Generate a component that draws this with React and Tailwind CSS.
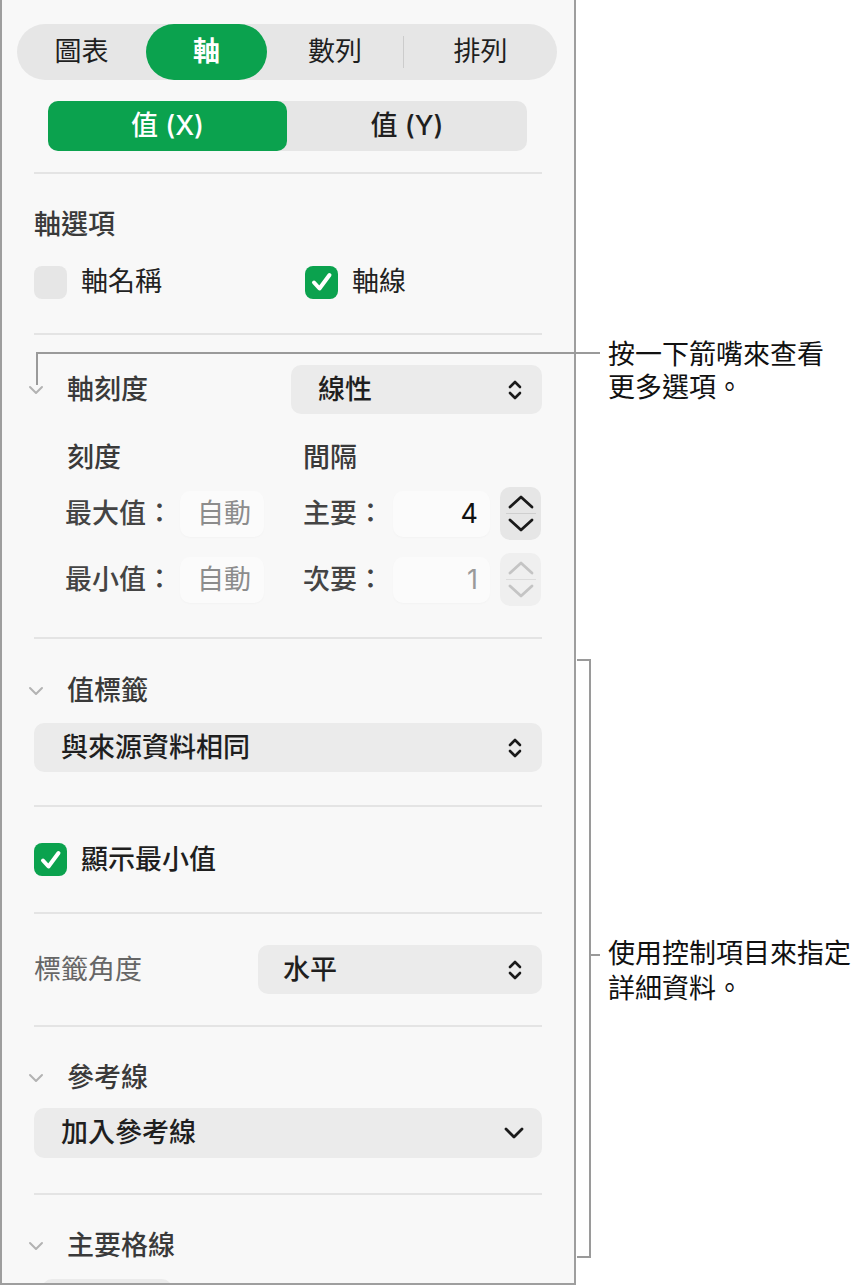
import React from "react";

const FONT = { fontFamily: '"Inter", "Noto Sans CJK TC", sans-serif' };

function Disclosure() {
  return (
    <svg width="16" height="10" viewBox="0 0 16 10" className="shrink-0 -ml-[6px]">
      <path d="M2 2 L8 8 L14 2" fill="none" stroke="#b3b3b3" strokeWidth="2" strokeLinecap="round" strokeLinejoin="round" />
    </svg>
  );
}

function UpDown() {
  return (
    <svg width="16" height="24" viewBox="0 0 16 24" className="shrink-0">
      <path d="M3 9 L8 4 L13 9" fill="none" stroke="#1a1a1a" strokeWidth="2.6" strokeLinecap="round" strokeLinejoin="round" />
      <path d="M3 15 L8 20 L13 15" fill="none" stroke="#1a1a1a" strokeWidth="2.6" strokeLinecap="round" strokeLinejoin="round" />
    </svg>
  );
}

function ChevronDown() {
  return (
    <svg width="20" height="12" viewBox="0 0 20 12" className="shrink-0">
      <path d="M2 2 L10 10 L18 2" fill="none" stroke="#1a1a1a" strokeWidth="2.8" strokeLinecap="round" strokeLinejoin="round" />
    </svg>
  );
}

function Check({ on }) {
  if (!on) return <div className="w-[33px] h-[33px] rounded-[8px] bg-[#e6e6e6] shrink-0" />;
  return (
    <div className="w-[33px] h-[33px] rounded-[8px] bg-[#0ba24e] shrink-0 flex items-center justify-center">
      <svg width="26" height="26" viewBox="0 0 26 26">
        <path d="M5 13.5 L10.5 19.5 L20.5 6" fill="none" stroke="#fff" strokeWidth="4" strokeLinecap="round" strokeLinejoin="round" />
      </svg>
    </div>
  );
}

function Stepper({ faded }) {
  const c = faded ? "#c4c4c4" : "#1a1a1a";
  return (
    <div className={`w-[41px] h-[53px] rounded-[10px] flex flex-col items-center justify-center ${faded ? "bg-[#efefef]" : "bg-[#e6e6e6]"}`}>
      <svg width="30" height="18" viewBox="0 0 30 18">
        <path d="M4 14 L15 4 L26 14" fill="none" stroke={c} strokeWidth="2.8" strokeLinecap="round" strokeLinejoin="round" />
      </svg>
      <div className={`w-[30px] h-[1px] my-[2px] ${faded ? "bg-[#dcdcdc]" : "bg-[#cfcfcf]"}`} />
      <svg width="30" height="18" viewBox="0 0 30 18">
        <path d="M4 4 L15 14 L26 4" fill="none" stroke={c} strokeWidth="2.8" strokeLinecap="round" strokeLinejoin="round" />
      </svg>
    </div>
  );
}

function Divider({ mt }) {
  return <div className={`h-[2px] bg-[#e4e4e4] mx-[32px] ${mt}`} />;
}

function Field({ children, className }) {
  return (
    <div className={`h-[46px] rounded-[10px] bg-[#fbfbfb] shadow-[0_1px_2px_rgba(0,0,0,0.025)] flex items-center ${className}`}>
      {children}
    </div>
  );
}

export default function App() {
  return (
    <div className="relative w-[862px] h-[1285px] bg-white flex overflow-hidden" style={FONT}>
      {/* inspector panel */}
      <div className="w-[576px] h-[1285px] shrink-0 border-x-2 border-b-2 border-[#9e9e9e] bg-[#f8f8f8] overflow-hidden pt-[24px] text-[27px] leading-[32px]">
        {/* top tabs */}
        <div className="ml-[15px] w-[540px] h-[56px] rounded-full bg-[#e6e6e6] flex items-center text-[#1f1f1f]">
          <div className="w-[129px] text-center">圖表</div>
          <div className="w-[121px] h-[56px] rounded-full bg-[#0ba24e] text-white font-semibold flex items-center justify-center">軸</div>
          <div className="w-[136px] text-center">數列</div>
          <div className="w-[1px] h-[32px] bg-[#cccccc]" />
          <div className="w-[153px] text-center">排列</div>
        </div>

        {/* X / Y segment */}
        <div className="mt-[21px] ml-[46px] w-[479px] h-[50px] rounded-[10px] bg-[#e6e6e6] flex items-center font-medium">
          <div className="w-[239px] h-[50px] rounded-[10px] bg-[#0ba24e] text-white flex items-center justify-center">值 (X)</div>
          <div className="flex-1 text-center text-[#1f1f1f]">值 (Y)</div>
        </div>

        <Divider mt="mt-[21px]" />

        {/* axis options */}
        <div className="px-[32px]">
          <div className="mt-[35px] font-medium text-[#3a3a3a]">軸選項</div>
          <div className="mt-[24px] flex items-center h-[34px]">
            <div className="w-[271px] flex items-center gap-[14px]">
              <Check on={false} />
              <span className="text-[#222]">軸名稱</span>
            </div>
            <div className="flex items-center gap-[14px]">
              <Check on />
              <span className="text-[#222]">軸線</span>
            </div>
          </div>
        </div>

        <Divider mt="mt-[34px]" />

        {/* axis scale */}
        <div className="px-[32px]">
          <div className="mt-[30px] flex items-center justify-between">
            <div className="flex items-center">
              <Disclosure />
              <span className="ml-[23px] font-medium text-[#3a3a3a]">軸刻度</span>
            </div>
            <div className="w-[251px] h-[49px] rounded-[10px] bg-[#ebebeb] flex items-center justify-between pl-[27px] pr-[19px] text-[#1f1f1f] font-medium">
              <span>線性</span>
              <UpDown />
            </div>
          </div>

          <div className="mt-[28px] flex font-medium text-[#3a3a3a]">
            <div className="pl-[33px] w-[269px]">刻度</div>
            <div>間隔</div>
          </div>

          <div className="mt-[13px] flex items-center h-[53px] pl-[31px] text-[#444]">
            <div className="w-[115px] font-medium">最大值：</div>
            <Field className="w-[84px] pl-[17px] text-[#8c8c8c]">自動</Field>
            <div className="w-[39px]" />
            <div className="w-[90px] font-medium">主要：</div>
            <Field className="w-[97px] justify-end pr-[12px] text-[#111]">4</Field>
            <div className="ml-[10px]"><Stepper /></div>
          </div>

          <div className="mt-[13px] flex items-center h-[53px] pl-[31px] text-[#444]">
            <div className="w-[115px] font-medium">最小值：</div>
            <Field className="w-[84px] pl-[17px] text-[#8c8c8c]">自動</Field>
            <div className="w-[39px]" />
            <div className="w-[90px] font-medium">次要：</div>
            <Field className="w-[97px] justify-end pr-[12px] text-[#9a9a9a]">1</Field>
            <div className="ml-[10px]"><Stepper faded /></div>
          </div>
        </div>

        <Divider mt="mt-[31px]" />

        {/* value labels */}
        <div className="px-[32px]">
          <div className="mt-[36px] flex items-center">
            <Disclosure />
            <span className="ml-[23px] font-medium text-[#3a3a3a]">值標籤</span>
          </div>
          <div className="mt-[16px] h-[49px] rounded-[10px] bg-[#ebebeb] flex items-center justify-between pl-[27px] pr-[19px] text-[#1f1f1f] font-medium">
            <span>與來源資料相同</span>
            <UpDown />
          </div>
        </div>

        <Divider mt="mt-[33px]" />

        <div className="px-[32px]">
          <div className="mt-[36px] flex items-center gap-[14px] h-[33px]">
            <Check on />
            <span className="font-medium text-[#1f1f1f]">顯示最小值</span>
          </div>
        </div>

        <Divider mt="mt-[36px]" />

        <div className="px-[32px]">
          <div className="mt-[31px] flex items-center justify-between">
            <span className="text-[#666]">標籤角度</span>
            <div className="w-[284px] h-[49px] rounded-[10px] bg-[#ebebeb] flex items-center justify-between pl-[25px] pr-[19px] text-[#1f1f1f] font-medium">
              <span>水平</span>
              <UpDown />
            </div>
          </div>
        </div>

        <Divider mt="mt-[31px]" />

        {/* reference lines */}
        <div className="px-[32px]">
          <div className="mt-[35px] flex items-center">
            <Disclosure />
            <span className="ml-[23px] font-medium text-[#3a3a3a]">參考線</span>
          </div>
          <div className="mt-[14px] h-[50px] rounded-[10px] bg-[#ebebeb] flex items-center justify-between pl-[27px] pr-[18px] text-[#1f1f1f] font-medium">
            <span>加入參考線</span>
            <ChevronDown />
          </div>
        </div>

        <Divider mt="mt-[35px]" />

        {/* major gridlines */}
        <div className="px-[32px]">
          <div className="mt-[35px] flex items-center">
            <Disclosure />
            <span className="ml-[23px] font-medium text-[#3a3a3a]">主要格線</span>
          </div>
          <div className="mt-[17px] ml-[8px] w-[130px] h-[40px] rounded-[10px] bg-[#ebebeb]" />
        </div>
      </div>

      {/* callout texts */}
      <div className="flex-1 pl-[32px] text-[27px] text-[#111]">
        <div className="mt-[338px] leading-[33px]">
          <div>按一下箭嘴來查看</div>
          <div>更多選項。</div>
        </div>
        <div className="mt-[532px] leading-[35px]">
          <div>使用控制項目來指定</div>
          <div>詳細資料。</div>
        </div>
      </div>

      {/* callout lines */}
      <div className="absolute left-[36px] top-[352px] w-[564px] h-[2px] bg-[#9a9a9a]" />
      <div className="absolute left-[36px] top-[352px] w-[2px] h-[33px] bg-[#9a9a9a]" />
      <div className="absolute left-[589px] top-[659px] w-[2px] h-[599px] bg-[#9a9a9a]" />
      <div className="absolute left-[577px] top-[659px] w-[14px] h-[2px] bg-[#9a9a9a]" />
      <div className="absolute left-[577px] top-[1256px] w-[14px] h-[2px] bg-[#9a9a9a]" />
      <div className="absolute left-[589px] top-[954px] w-[11px] h-[2px] bg-[#9a9a9a]" />
    </div>
  );
}
